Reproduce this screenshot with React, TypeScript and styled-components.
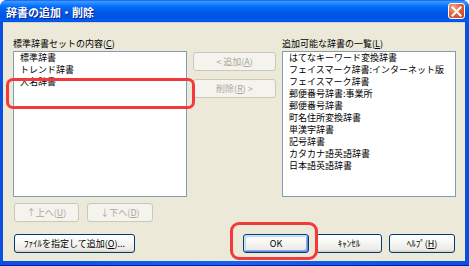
import React from 'react';
import styled, { createGlobalStyle } from 'styled-components';

const Global = createGlobalStyle`
  html, body { margin: 0; padding: 0; background: #ffffff; }
  body { font-family: "Noto Sans CJK JP", "Noto Sans", sans-serif; }
  * { box-sizing: border-box; }
`;

const Window = styled.div`
  position: relative;
  width: 469px;
  height: 266px;
  display: flex;
  flex-direction: column;
  border-radius: 7px 7px 0 0;
  overflow: hidden;
  background: #0831d9;
`;

const TitleBar = styled.div`
  flex: none;
  height: 22px;
  display: flex;
  align-items: center;
  justify-content: space-between;
  padding: 0 4px 0 6px;
  background: linear-gradient(
    to bottom,
    #0a5ef0 0%,
    #3d95ff 7%,
    #2a8cff 14%,
    #127dff 22%,
    #0369fc 32%,
    #0262ee 45%,
    #0058e6 58%,
    #0054e3 72%,
    #0056ea 86%,
    #0060f5 94%,
    #0049dd 100%
  );
`;

const Title = styled.span`
  color: #ffffff;
  font-size: 11px;
  font-weight: bold;
  line-height: 14px;
  margin-top: 2px;
  text-shadow: 1px 1px 0 #0a1e8f;
`;

const CloseButton = styled.div`
  width: 17px;
  height: 16px;
  display: flex;
  align-items: center;
  justify-content: center;
  border: 1px solid #ffffff;
  border-radius: 3px;
  background: radial-gradient(circle at 30% 25%, #f4a58a 0%, #e2643f 45%, #c8401f 100%);
`;

const Frame = styled.div`
  flex: 1;
  display: flex;
  padding: 0 4px 4px 3px;
  background: linear-gradient(to right, #0a4fe0 0%, #1561f0 50%, #0a4fe0 100%);
  border-bottom: 1px solid #0020a8;
`;

const Body = styled.div`
  flex: 1;
  display: flex;
  flex-direction: column;
  background: #ece9d8;
  border-top: 1px solid #d6d3ce;
  padding: 14px 9px 0 10px;
  font-size: 9px;
  color: #000000;
`;

const Main = styled.div`
  display: grid;
  grid-template-columns: 174px 83px 174px;
  grid-template-rows: 13px 146px;
  column-gap: 6px;
  row-gap: 1px;
`;

const Label = styled.div`
  font-size: 9px;
  line-height: 13px;
  white-space: nowrap;
`;

const ListBox = styled.div`
  grid-row: 2;
  border: 1px solid #7f9db9;
  background: #ffffff;
  padding: 0 4px;
`;

const ListItem = styled.div`
  font-size: 9px;
  line-height: 12px;
  height: 12px;
  white-space: nowrap;
  padding-left: 2px;
`;

const MiddleColumn = styled.div`
  grid-row: 2;
  grid-column: 2;
  display: flex;
  flex-direction: column;
  gap: 8px;
  padding-top: 1px;
`;

const Button = styled.div<{ $w?: number; $disabled?: boolean; $default?: boolean }>`
  width: ${(p) => (p.$w ? `${p.$w}px` : '100%')};
  height: 19px;
  flex: none;
  display: flex;
  align-items: center;
  justify-content: center;
  font-size: 9px;
  white-space: nowrap;
  border-radius: 3px;
  color: ${(p) => (p.$disabled ? '#aca899' : '#000000')};
  border: 1px solid ${(p) => (p.$disabled ? '#cac8bb' : '#003c74')};
  background: ${(p) =>
    p.$disabled
      ? '#f4f3ee'
      : 'linear-gradient(to bottom, #ffffff 0%, #f7f7f4 40%, #ecebe6 85%, #d6d0c5 100%)'};
  box-shadow: ${(p) =>
    p.$default
      ? 'inset 1px 1px 0 #cee7ff, inset -1px -1px 0 #6982ee, inset 2px 2px 0 #bcd4f6, inset -2px -2px 0 #89ade4'
      : 'none'};
`;

const StepRow = styled.div`
  display: flex;
  gap: 8px;
  margin: 6px 0 0 1px;
`;

const BottomRow = styled.div`
  display: flex;
  align-items: center;
  margin: 12px 1px 0 1px;
`;

const Spacer = styled.div`
  flex: 1;
`;

const ActionGroup = styled.div`
  display: flex;
  gap: 7px;
`;

const Highlight = styled.div<{ $top: number; $left: number; $width: number; $height: number; $radius: number }>`
  position: absolute;
  top: ${(p) => p.$top}px;
  left: ${(p) => p.$left}px;
  width: ${(p) => p.$width}px;
  height: ${(p) => p.$height}px;
  border: 3px solid #f23a3a;
  border-radius: ${(p) => p.$radius}px;
  pointer-events: none;
`;

const leftItems = ['標準辞書', 'トレンド辞書', '人名辞書'];
const rightItems = [
  'はてなキーワード変換辞書',
  'フェイスマーク辞書:インターネット版',
  'フェイスマーク辞書',
  '郵便番号辞書:事業所',
  '郵便番号辞書',
  '町名住所変換辞書',
  '単漢字辞書',
  '記号辞書',
  'カタカナ語英語辞書',
  '日本語英語辞書',
];

export default function App() {
  return (
    <>
      <Global />
      <Window>
        <TitleBar>
          <Title>辞書の追加・削除</Title>
          <CloseButton>
            <svg width="11" height="11" viewBox="0 0 11 11">
              <path d="M1.5 1.5 L9.5 9.5 M9.5 1.5 L1.5 9.5" stroke="#ffffff" strokeWidth="2" strokeLinecap="square" />
            </svg>
          </CloseButton>
        </TitleBar>
        <Frame>
          <Body>
            <Main>
              <Label>
                標準辞書セットの内容(<u>C</u>)
              </Label>
              <div />
              <Label>
                追加可能な辞書の一覧(<u>L</u>)
              </Label>
              <ListBox>
                {leftItems.map((t) => (
                  <ListItem key={t}>{t}</ListItem>
                ))}
              </ListBox>
              <MiddleColumn>
                <Button $disabled>
                  &lt; 追加(<u>A</u>)
                </Button>
                <Button $disabled>
                  削除(<u>R</u>) &gt;
                </Button>
              </MiddleColumn>
              <ListBox>
                {rightItems.map((t) => (
                  <ListItem key={t}>{t}</ListItem>
                ))}
              </ListBox>
            </Main>
            <StepRow>
              <Button $w={65} $disabled>
                ↑上へ(<u>U</u>)
              </Button>
              <Button $w={66} $disabled>
                ↓下へ(<u>D</u>)
              </Button>
            </StepRow>
            <BottomRow>
              <Button $w={121}>
                ﾌｧｲﾙを指定して追加(<u>O</u>)...
              </Button>
              <Spacer />
              <ActionGroup>
                <Button $w={66} $default>
                  OK
                </Button>
                <Button $w={66}>ｷｬﾝｾﾙ</Button>
                <Button $w={66}>
                  ﾍﾙﾌﾟ(<u>H</u>)
                </Button>
              </ActionGroup>
            </BottomRow>
          </Body>
        </Frame>
        <Highlight $top={78} $left={6} $width={189} $height={31} $radius={7} />
        <Highlight $top={222} $left={230} $width={88} $height={38} $radius={9} />
      </Window>
    </>
  );
}
